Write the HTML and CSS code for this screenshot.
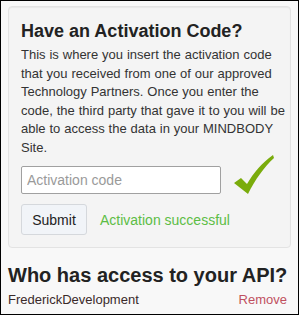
FILE: index.html
```html
<!DOCTYPE html>
<html>
<head>
<meta charset="utf-8">
<link rel="stylesheet" href="styles.css">
</head>
<body>
<div class="frame">
  <div class="well">
    <h2 class="title">Have an Activation Code?</h2>
    <p class="desc">This is where you insert the activation code that you received from one of our approved Technology Partners. Once you enter the code, the third party that gave it to you will be able to access the data in your MINDBODY Site.</p>
    <div class="code-row">
      <input class="code-input" type="text" placeholder="Activation code">
      <svg class="check" width="42" height="42" viewBox="0 0 42 42">
        <path d="M1 30 L8 25 L14 31 C21 19 29 10 40 2 L41 5 C31 14 22 27 15 41 Z" fill="#7aac0c"/>
      </svg>
    </div>
    <div class="submit-row">
      <button class="submit">Submit</button>
      <span class="success">Activation successful</span>
    </div>
  </div>
  <h2 class="subtitle">Who has access to your API?</h2>
  <div class="access-row">
    <span class="partner">FrederickDevelopment</span>
    <a class="remove">Remove</a>
  </div>
</div>
</body>
</html>
```
FILE: styles.css
```css
* { box-sizing: border-box; }
html, body { margin: 0; padding: 0; }
body {
  width: 299px;
  height: 315px;
  background: #f8f8f8;
  font-family: "Liberation Sans", Arial, sans-serif;
  color: #333;
  overflow: hidden;
}
.frame {
  width: 299px;
  height: 315px;
  border: 1px solid #000;
  padding: 5px 7px 0 7px;
}
.well {
  background: #f4f4f4;
  border: 1px solid #e3e3e3;
  border-radius: 4px;
  box-shadow: inset 0 1px 1px rgba(0,0,0,.05);
  padding: 11px 4px 12px 12px;
  height: 242px;
}
.title {
  margin: 0 0 2px 0;
  font-size: 18px;
  font-weight: bold;
  line-height: 26px;
  color: #222;
}
.desc {
  margin: 0;
  font-size: 13px;
  line-height: 18.5px;
  word-spacing: 0.3px;
  color: #333;
}
.code-row {
  display: flex;
  align-items: flex-start;
  height: 28px;
  margin-top: 9px;
}
.code-input {
  width: 200px;
  height: 28px;
  border: 1px solid #a0a0a0;
  border-radius: 2px;
  padding: 0 5px;
  font-family: "Liberation Sans", Arial, sans-serif;
  font-size: 14px;
  background: #fff;
}
.code-input::placeholder { color: #9a9a9a; }
.check { margin-left: 12px; margin-top: -13px; flex: none; }
.submit-row {
  display: flex;
  align-items: center;
  margin-top: 10px;
}
.submit {
  width: 66px;
  height: 31px;
  background: #f1f4f8;
  border: 1px solid #d5d8dc;
  border-radius: 3px;
  font-family: "Liberation Sans", Arial, sans-serif;
  font-size: 14px;
  color: #222;
  padding: 0;
}
.success {
  margin-left: 13px;
  color: #5cbd45;
  font-size: 14px;
}
.subtitle {
  margin: 15px 0 0 0;
  font-size: 20px;
  font-weight: bold;
  line-height: 24px;
  color: #222;
}
.access-row {
  display: flex;
  justify-content: space-between;
  margin-top: 5px;
  font-size: 13px;
}
.partner { color: #3a2a2a; }
.remove { color: #c0505e; margin-right: 4px; }
```
